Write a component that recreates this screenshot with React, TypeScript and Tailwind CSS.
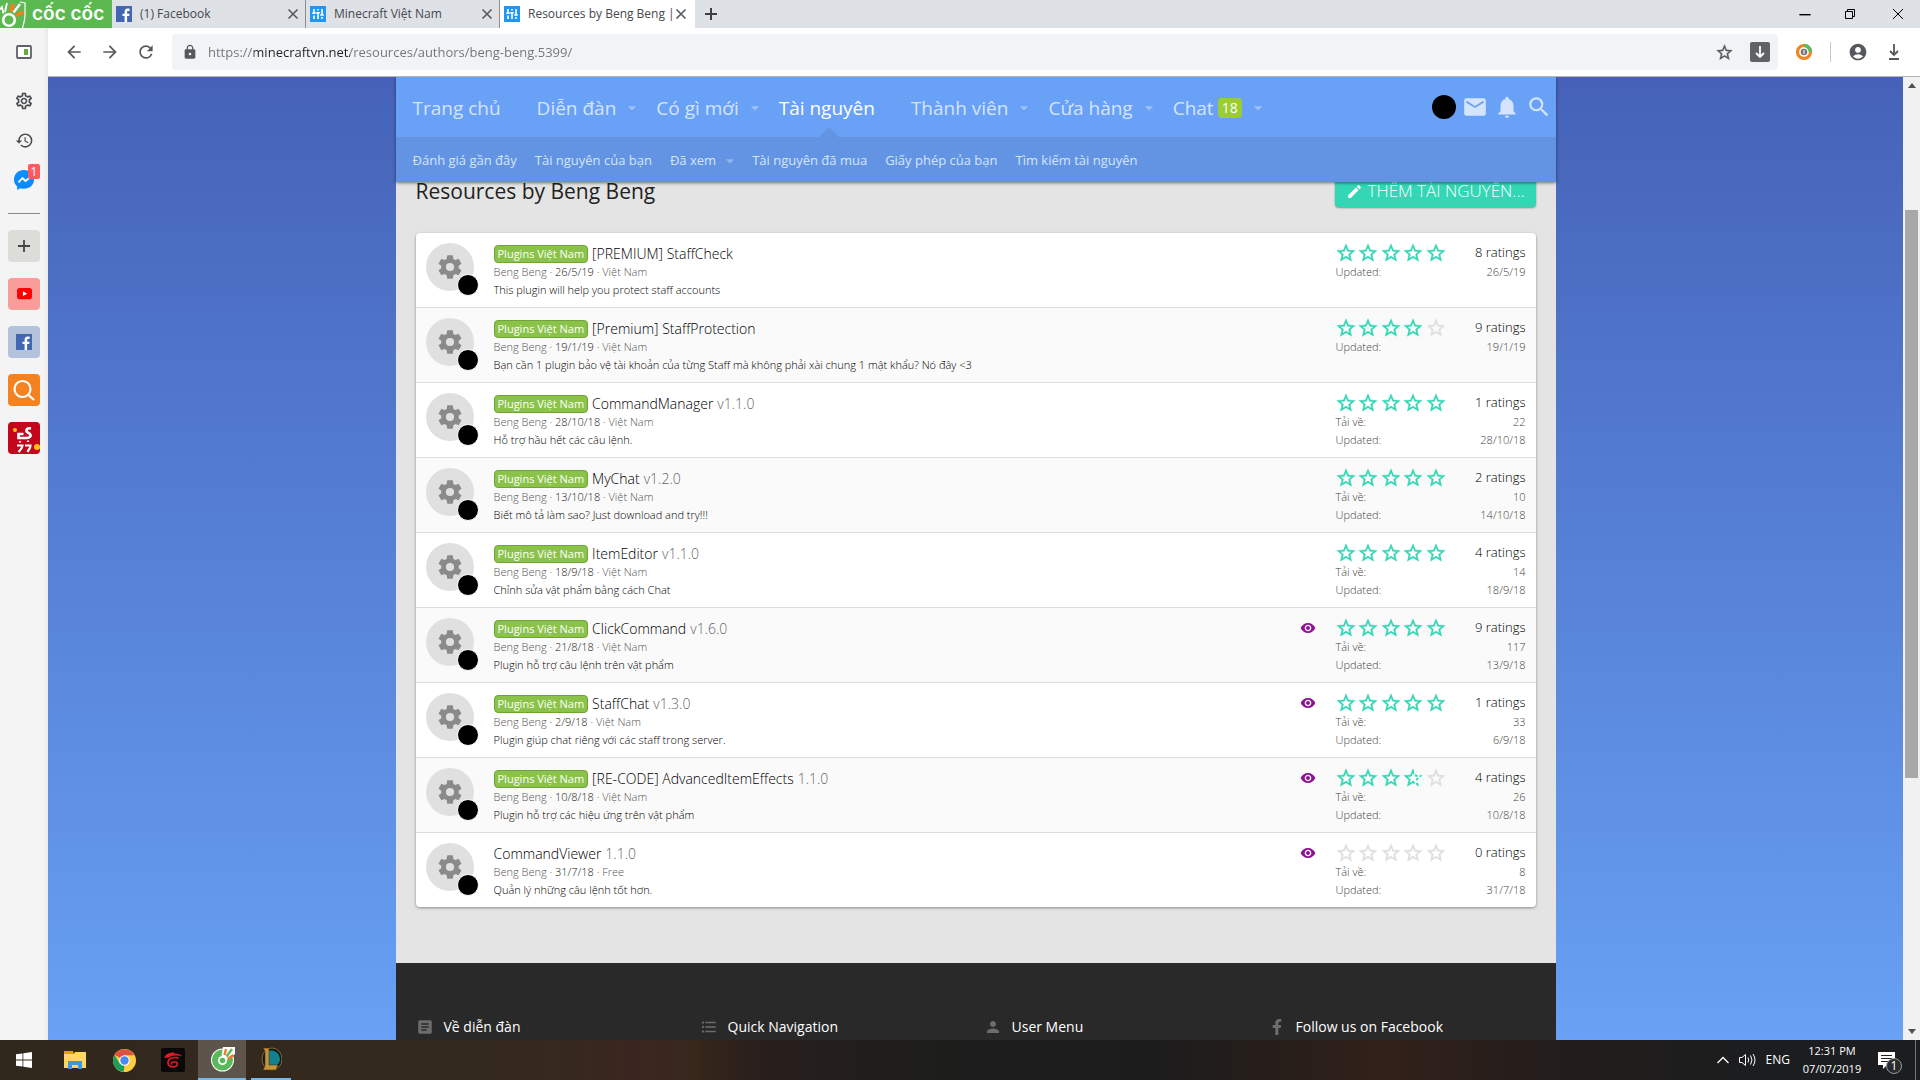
import type { ReactNode } from 'react';
import {
  MdAccountCircle,
  MdArrowBack,
  MdArrowDropDown,
  MdArrowForward,
  MdArticle,
  MdEdit,
  MdEmail,
  MdFormatListBulleted,
  MdHistory,
  MdLock,
  MdNotifications,
  MdOutlineSettings,
  MdPerson,
  MdRefresh,
  MdSearch,
  MdVisibility,
} from 'react-icons/md';
import { FaFacebookF } from 'react-icons/fa';

type Resource = {
  title: string;
  version?: string;
  label?: string;
  date: string;
  category: string;
  description: string;
  stars: number;
  ratings: number;
  downloads?: number;
  updated: string;
  watched?: boolean;
};

const VN = 'Plugins Việt Nam';

const resources: Resource[] = [
  { title: '[PREMIUM] StaffCheck', label: VN, date: '26/5/19', category: 'Việt Nam', description: 'This plugin will help you protect staff accounts', stars: 5, ratings: 8, updated: '26/5/19' },
  { title: '[Premium] StaffProtection', label: VN, date: '19/1/19', category: 'Việt Nam', description: 'Bạn cần 1 plugin bảo vệ tài khoản của từng Staff mà không phải xài chung 1 mật khẩu? Nó đây <3', stars: 4, ratings: 9, updated: '19/1/19' },
  { title: 'CommandManager', version: 'v1.1.0', label: VN, date: '28/10/18', category: 'Việt Nam', description: 'Hỗ trợ hầu hết các câu lệnh.', stars: 5, ratings: 1, downloads: 22, updated: '28/10/18' },
  { title: 'MyChat', version: 'v1.2.0', label: VN, date: '13/10/18', category: 'Việt Nam', description: 'Biết mô tả làm sao? Just download and try!!!', stars: 5, ratings: 2, downloads: 10, updated: '14/10/18' },
  { title: 'ItemEditor', version: 'v1.1.0', label: VN, date: '18/9/18', category: 'Việt Nam', description: 'Chỉnh sửa vật phẩm bằng cách Chat', stars: 5, ratings: 4, downloads: 14, updated: '18/9/18' },
  { title: 'ClickCommand', version: 'v1.6.0', label: VN, date: '21/8/18', category: 'Việt Nam', description: 'Plugin hỗ trợ câu lệnh trên vật phẩm', stars: 5, ratings: 9, downloads: 117, updated: '13/9/18', watched: true },
  { title: 'StaffChat', version: 'v1.3.0', label: VN, date: '2/9/18', category: 'Việt Nam', description: 'Plugin giúp chat riêng với các staff trong server.', stars: 5, ratings: 1, downloads: 33, updated: '6/9/18', watched: true },
  { title: '[RE-CODE] AdvancedItemEffects', version: '1.1.0', label: VN, date: '10/8/18', category: 'Việt Nam', description: 'Plugin hỗ trợ các hiệu ứng trên vật phẩm', stars: 3.5, ratings: 4, downloads: 26, updated: '10/8/18', watched: true },
  { title: 'CommandViewer', version: '1.1.0', date: '31/7/18', category: 'Free', description: 'Quản lý những câu lệnh tốt hơn.', stars: 0, ratings: 0, downloads: 8, updated: '31/7/18', watched: true },
];

function CloseIcon() {
  return (
    <svg viewBox="0 0 12 12" className="size-3" fill="none" stroke="currentColor" strokeWidth="1.6">
      <path d="M1.5 1.5l9 9M10.5 1.5l-9 9" />
    </svg>
  );
}

function GearIcon() {
  return (
    <svg viewBox="0 0 24 24" className="size-7" fill="currentColor">
      <path d="M12,15.5A3.5,3.5 0 0,1 8.5,12A3.5,3.5 0 0,1 12,8.5A3.5,3.5 0 0,1 15.5,12A3.5,3.5 0 0,1 12,15.5M19.43,12.97C19.47,12.65 19.5,12.33 19.5,12C19.5,11.67 19.47,11.34 19.43,11L21.54,9.37C21.73,9.22 21.78,8.95 21.66,8.73L19.66,5.27C19.54,5.05 19.27,4.96 19.05,5.05L16.56,6.05C16.04,5.66 15.5,5.32 14.87,5.07L14.5,2.42C14.46,2.18 14.25,2 14,2H10C9.75,2 9.54,2.18 9.5,2.42L9.13,5.07C8.5,5.32 7.96,5.66 7.44,6.05L4.95,5.05C4.73,4.96 4.46,5.05 4.34,5.27L2.34,8.73C2.21,8.95 2.27,9.22 2.46,9.37L4.57,11C4.53,11.34 4.5,11.67 4.5,12C4.5,12.33 4.53,12.65 4.57,12.97L2.46,14.63C2.27,14.78 2.21,15.05 2.34,15.27L4.34,18.73C4.46,18.95 4.73,19.03 4.95,18.95L7.44,17.94C7.96,18.34 8.5,18.68 9.13,18.93L9.5,21.58C9.54,21.82 9.75,22 10,22H14C14.25,22 14.46,21.82 14.5,21.58L14.87,18.93C15.5,18.67 16.04,18.34 16.56,17.94L19.05,18.95C19.27,19.03 19.54,18.95 19.66,18.73L21.66,15.27C21.78,15.05 21.73,14.78 21.54,14.63L19.43,12.97Z" />
    </svg>
  );
}

function FacebookSquare() {
  return (
    <svg viewBox="0 0 16 16" className="size-4 shrink-0">
      <rect width="16" height="16" fill="#4267b2" rx="0.5" />
      <path fill="#fff" d="M8.600 16V10H6.500V7.700h2.100V5.900c0-2.100 1.200-3.300 3.100-3.300.9 0 1.700.1 1.900.1v2.200h-1.300c-1 0-1.200.5-1.200 1.200v1.600h2.400l-.3 2.300h-2.100v6z" />
    </svg>
  );
}

function SlidersIcon() {
  return (
    <svg viewBox="0 0 16 16" className="size-4 shrink-0">
      <rect width="16" height="16" fill="#2196f3" />
      <path stroke="#fff" strokeWidth="1.600" fill="none" d="M4 3v4M4 9.500V13M8 3v1.500M8 7v6M12 3v5.500M12 11v2M2.200 7.200h3.600M6.200 6.800h3.600M10.200 9h3.600" />
    </svg>
  );
}

function CocCocMark() {
  return (
    <svg viewBox="0 0 26 28" className="h-7 w-[26px] shrink-0" fill="none">
      <circle cx="9" cy="20" r="5.800" stroke="#fff" strokeWidth="2.600" />
      <path d="M0 9.500L2 7l1.500 6.500M7 3L5 12" stroke="#fff" strokeWidth="1.800" />
      <path d="M13 4l-2 7.500" stroke="#ff7a1a" strokeWidth="3.600" />
      <path d="M13.500 12.500L20 4" stroke="#fff" strokeWidth="2.400" />
      <path d="M15.500 15.500l8-3.500" stroke="#ff7a1a" strokeWidth="3.400" />
      <path d="M20 2l5 1v9c.5 6-1 11-2.500 16" stroke="#fff" strokeWidth="1.200" />
    </svg>
  );
}

function BrowserTab({ icon, title, active, close }: { icon: ReactNode; title: string; active?: boolean; close: string }) {
  return (
    <div className={active ? 'flex w-[195px] items-center gap-2 bg-white pr-1.5 pl-1' : 'flex w-[194px] items-center gap-2 border-r border-[#8a8d91] px-1'}>
      {icon}
      <button className="min-w-0 flex-1 text-left text-[12px] whitespace-nowrap text-[#45484d]">{title}</button>
      <button aria-label={close} className="px-0.5 text-[#55585c]">
        <CloseIcon />
      </button>
    </div>
  );
}

function TabStrip() {
  return (
    <header className="flex h-7 shrink-0 bg-[#dee1e6]">
      <a href="#home" className="flex w-28 items-center gap-1.5 overflow-hidden bg-[#5cb850] text-white">
        <CocCocMark />
        <span className="font-['Inter',sans-serif] text-[19px] leading-7 font-semibold whitespace-nowrap">cốc cốc</span>
      </a>
      <BrowserTab icon={<FacebookSquare />} title="(1) Facebook" close="Close Facebook" />
      <BrowserTab icon={<SlidersIcon />} title="Minecraft Việt Nam" close="Close Minecraft" />
      <BrowserTab icon={<SlidersIcon />} title="Resources by Beng Beng |" active close="Close Resources" />
      <button aria-label="New tab" className="px-2.5 text-[#3c4043]">
        <svg viewBox="0 0 12 12" className="size-3" stroke="currentColor" strokeWidth="2">
          <path d="M6 0v12M0 6h12" />
        </svg>
      </button>
      <div className="ml-auto flex items-center text-black">
        <button aria-label="Minimize" className="px-4">
          <svg viewBox="0 0 10 10" className="w-[14px]" stroke="currentColor"><path d="M1 5.500h8" /></svg>
        </button>
        <button aria-label="Restore" className="px-4">
          <svg viewBox="0 0 12 12" className="w-3" fill="none" stroke="currentColor"><path d="M1.500 3.500h7v7h-7zM3.500 3.500v-2h7v7h-2" /></svg>
        </button>
        <button aria-label="Close window" className="pr-4 pl-5">
          <svg viewBox="0 0 12 12" className="w-3" stroke="currentColor"><path d="M1 1l10 10M11 1L1 11" /></svg>
        </button>
      </div>
    </header>
  );
}

function SideRail() {
  return (
    <aside className="flex w-12 shrink-0 flex-col items-center bg-linear-to-r from-[#f4f4f4] from-90% to-[#e9e9e9] text-[#4a4d50]">
      <button aria-label="Toggle panel" className="mt-4">
        <svg viewBox="0 0 16 16" className="size-4"><rect x="1" y="2" width="14" height="12" rx="1" fill="#fff" stroke="#5f6368" strokeWidth="1.800" /><path fill="#5fae3a" d="M8 5h4v6H8z" /></svg>
      </button>
      <button aria-label="Settings" className="mt-[31px] text-[20px]"><MdOutlineSettings /></button>
      <button aria-label="History" className="mt-5 text-[19px]"><MdHistory /></button>
      <button aria-label="Messenger" className="relative mt-5">
        <svg viewBox="0 0 20 20" className="size-5">
          <path fill="#0a8cff" d="M10 0C4.300 0 0 4.100 0 9.500c0 2.900 1.200 5.300 3.200 7V20l3-1.700c1.200.4 2.500.5 3.800.5 5.700 0 10-4 10-9.300S15.700 0 10 0z" />
          <path fill="none" stroke="#fff" strokeWidth="1.800" d="M4.500 12.300L8.500 8l3 3 4-3.300" />
        </svg>
        <span className="absolute -top-1.5 -right-1.5 h-[15px] w-3 rounded-xs bg-[#ff5a5f] text-[12px] leading-[15px] text-white">1</span>
      </button>
      <hr className="mt-[23px] w-8 border-[#8b8b8b]" />
      <div className="mt-4 flex flex-col gap-4">
        <button aria-label="Add shortcut" className="grid size-8 place-items-center rounded bg-[#dcdcd8]">
          <svg viewBox="0 0 12 12" className="size-3" stroke="#444" strokeWidth="1.800"><path d="M6 0v12M0 6h12" /></svg>
        </button>
        <button aria-label="YouTube" className="grid size-8 place-items-center rounded bg-[#f99d9b]">
          <svg viewBox="0 0 16 12" className="w-[15px]"><rect width="16" height="12" rx="3" fill="#f00" /><path fill="#fff" d="M6.300 3.500v5L11 6z" /></svg>
        </button>
        <button aria-label="Facebook" className="grid size-8 place-items-center rounded bg-[#b5c2de]"><FacebookSquare /></button>
        <button aria-label="Search" className="grid size-8 place-items-center rounded bg-[#f58220]">
          <svg viewBox="0 0 24 24" className="size-6" fill="none" stroke="#fff" strokeWidth="2.200"><circle cx="10.500" cy="11" r="8" /><path d="M16.500 17l5.500 5" /></svg>
        </button>
        <button aria-label="Games" className="size-8 overflow-hidden rounded bg-[#c4061c]">
          <svg viewBox="0 0 32 32" className="size-8" fill="none">
            <circle cx="7" cy="8" r="2" fill="#ffc20e" /><circle cx="29" cy="25" r="3" fill="#ffc20e" />
            <path stroke="#fff" strokeWidth="2.600" d="M23 6.500c-5-1-6 3-2.500 4.500 4 2 2 5-2 5h-8v-4h5" />
            <path stroke="#fff" strokeWidth="2.200" d="M9 23.500h5.500c0 3-2 4-4 6.500M17 23.500h5.500c0 3-2 4-3 6.500M12 19v1.500M20 18.500V20" />
          </svg>
        </button>
      </div>
    </aside>
  );
}

const STAR = 'M22 9.240l-7.190-.62L12 2 9.190 8.630 2 9.240l5.460 4.730L5.820 21 12 17.270 18.180 21l-1.630-7.030L22 9.240zM12 15.400l-3.760 2.270 1-4.280-3.320-2.880 4.380-.38L12 6.100l1.710 4.040 4.380.38-3.320 2.880 1 4.280L12 15.400z';

function StarIcon({ className }: { className: string }) {
  return (
    <svg viewBox="0 0 24 24" className={className} fill="currentColor" stroke="currentColor" strokeWidth="0.4">
      <path d={STAR} />
    </svg>
  );
}

function HalfStar() {
  return (
    <svg viewBox="0 0 24 24" className="size-[22px]" fill="#2fd6b3" stroke="#2fd6b3" strokeWidth="0.4">
      <clipPath id="half-left"><path d="M0 0h13v24H0z" /></clipPath>
      <clipPath id="half-dashes"><path d="M14 5h3v7h-3zM19 7h5v4h-5zM15 12h3.500v2.500H15zM12 14h2v5h-2zM15.500 17.500h4V22h-4z" /></clipPath>
      <path d={STAR} clipPath="url(#half-left)" />
      <path d={STAR} clipPath="url(#half-dashes)" />
    </svg>
  );
}

function AddressBar() {
  return (
    <div className="flex h-[49px] shrink-0 items-center border-b border-[#b5b5b5] bg-white pr-5 pl-4 text-[#55585c]">
      <div className="flex w-[108px] gap-4 text-[20px]">
        <button aria-label="Back"><MdArrowBack /></button>
        <button aria-label="Forward"><MdArrowForward /></button>
        <button aria-label="Reload"><MdRefresh /></button>
      </div>
      <div className="flex h-9 flex-1 items-center rounded bg-[#f1f3f4] pr-2 pl-2.5">
        <MdLock className="size-4" />
        <input
          aria-label="Address"
          className="ml-2.5 min-w-0 flex-1 bg-[linear-gradient(90deg,#70757a_46px,#202124_46px,#202124_142px,#70757a_142px)] bg-clip-text pt-0.5 text-[13px] text-transparent outline-none"
          defaultValue="https://minecraftvn.net/resources/authors/beng-beng.5399/"
        />
        <button aria-label="Bookmark"><StarIcon className="size-[19px]" /></button>
        <button aria-label="Download media" className="ml-4 grid size-5 place-items-center rounded-xs bg-[#5f6368]">
          <svg viewBox="0 0 12 12" className="size-3" fill="none" stroke="#fff" strokeWidth="1.800"><path d="M6 0v11M2 7l4 4 4-4" /></svg>
        </button>
      </div>
      <button aria-label="Extension" className="ml-[17px]">
        <svg viewBox="0 0 18 18" className="size-[18px]" fill="none">
          <circle cx="9" cy="9" r="6.500" stroke="#f58220" strokeWidth="3.200" />
          <path d="M9 2.500A6.500 6.500 0 0 1 15.500 9" stroke="#5cb85c" strokeWidth="3.600" />
          <circle cx="9" cy="9" r="3.300" fill="#777" /><path d="M9 7v4" stroke="#fff" />
        </svg>
      </button>
      <span className="mx-[17px] h-5 w-px bg-[#c8c8c8]" />
      <button aria-label="Profile" className="text-[20px]"><MdAccountCircle /></button>
      <button aria-label="Downloads" className="ml-5">
        <svg viewBox="0 0 12 16" className="h-4 w-3" fill="none" stroke="currentColor" strokeWidth="1.800"><path d="M6 0v11M2 7l4 4 4-4M1 15h10" /></svg>
      </button>
    </div>
  );
}

const navItems = [
  { label: 'Trang chủ' },
  { label: 'Diễn đàn', menu: true },
  { label: 'Có gì mới', menu: true },
  { label: 'Tài nguyên', active: true },
  { label: 'Thành viên', menu: true },
  { label: 'Cửa hàng', menu: true },
  { label: 'Chat', badge: '18', menu: true },
];

const subItems = [
  { label: 'Đánh giá gần đây' },
  { label: 'Tài nguyên của bạn' },
  { label: 'Đã xem', menu: true },
  { label: 'Tài nguyên đã mua' },
  { label: 'Giấy phép của bạn' },
  { label: 'Tìm kiếm tài nguyên' },
];

function SiteHeader() {
  return (
    <div className="relative z-10 shadow-[0_1px_3px_rgba(0,0,0,0.5)]">
      <nav className="flex h-[60px] items-center bg-[#69a1f6] pr-1 pl-[17px] text-[19px] text-[#d5e4fd]">
        {navItems.map((n) => (
          <div key={n.label} className={n.menu ? 'relative flex h-full items-center pt-0.5 pr-[14px]' : 'relative flex h-full items-center pt-0.5 pr-9'}>
            <a href="#nav" className={n.active ? 'text-white' : ''}>{n.label}</a>
            {n.active && <span className="absolute bottom-0 left-10 border-x-10 border-b-10 border-x-transparent border-b-[#6394e3]" />}
            {n.badge && <span className="ml-1 rounded bg-[#9acd32] px-1 text-[14px] leading-5 text-white">{n.badge}</span>}
            {n.menu && <MdArrowDropDown className="ml-1.5 size-5 text-[#9fc2f9]" />}
          </div>
        ))}
        <div className="ml-auto flex items-center gap-1.5 text-[26px]">
          <button aria-label="Account" className="size-6 rounded-full bg-black" />
          <button aria-label="Inbox"><MdEmail /></button>
          <button aria-label="Alerts"><MdNotifications /></button>
          <button aria-label="Search site"><MdSearch /></button>
        </div>
      </nav>
      <nav className="flex h-[45px] items-center gap-[18px] bg-[#6394e3] pt-0.5 pl-[17px] text-[13px] font-medium text-[#d5e4fd]">
        {subItems.map((s) => (
          <div key={s.label} className="flex items-center">
            <a href="#sub">{s.label}</a>
            {s.menu && <MdArrowDropDown className="-mr-1.5 ml-1 size-5 text-[#92b6ee]" />}
          </div>
        ))}
      </nav>
    </div>
  );
}

function Stars({ value }: { value: number }) {
  return (
    <div role="img" aria-label={`${value} / 5`} className="-ml-px flex w-28 justify-between">
      {[1, 2, 3, 4, 5].map((i) =>
        value >= i ? (
          <StarIcon key={i} className="size-[22px] text-[#2fd6b3]" />
        ) : value >= i - 0.5 ? (
          <HalfStar key={i} />
        ) : (
          <StarIcon key={i} className="size-[22px] text-[#dedede]" />
        ),
      )}
    </div>
  );
}

function ResourceRow({ r }: { r: Resource }) {
  return (
    <li className="flex h-[75px] border-b border-[#dedede] px-2.5 last:h-[74px] last:border-b-0 even:bg-[#fafafa]">
      <a href="#resource" aria-label={r.title} className="relative mt-2.5 grid size-12 shrink-0 place-items-center rounded-full bg-[#e0e0e0] text-[#8a8a8a]">
        <GearIcon />
        <span className="absolute top-[31px] left-[31px] size-[22px] rounded-full border border-white bg-black" />
      </a>
      <div className="ml-5 min-w-0 flex-1 pt-2.5">
        <div className="flex h-5 items-center text-[14px] font-light text-black">
          {r.label && (
            <span className="mt-0.5 mr-1 rounded border border-[#6fa536] bg-[#8bc34a] px-[3px] text-[11px] leading-4 font-normal text-white">{r.label}</span>
          )}
          <a href="#resource">{r.title}</a>
          {r.version && <span className="ml-1 text-[#666]">{r.version}</span>}
        </div>
        <p className="text-[11px] leading-[17px] font-light text-[#555]">
          Beng Beng · <span className="text-[#222]">{r.date}</span> · {r.category}
        </p>
        <p className="truncate text-[11px] leading-5 font-light text-black">{r.description}</p>
      </div>
      {r.watched && <MdVisibility title="Watched" className="mt-3 mr-5 size-4 text-[#8e1294]" />}
      <div className="w-[190px] pt-2.5">
        <div className="flex h-5 items-center justify-between text-[13px] font-light text-black">
          <Stars value={r.stars} />
          <span>{r.ratings} ratings</span>
        </div>
        <dl className="grid grid-cols-2 text-[11px] leading-[18px] font-light text-[#444]">
          {r.downloads !== undefined && (
            <>
              <dt>Tải về:</dt>
              <dd className="text-right">{r.downloads}</dd>
            </>
          )}
          <dt>Updated:</dt>
          <dd className="text-right">{r.updated}</dd>
        </dl>
      </div>
    </li>
  );
}

const footerItems = [
  { label: 'Về diễn đàn', icon: <MdArticle /> },
  { label: 'Quick Navigation', icon: <MdFormatListBulleted /> },
  { label: 'User Menu', icon: <MdPerson /> },
  { label: 'Follow us on Facebook', icon: <FaFacebookF className="p-px" /> },
];

function Page() {
  return (
    <div className="flex min-h-0 flex-1">
      <main className="flex min-w-0 flex-1 justify-center overflow-hidden bg-linear-to-b from-[#4562b8] to-[#68a1f5]">
        <div className="flex w-full max-w-[1160px] flex-col bg-[#e4e4e4]">
          <SiteHeader />
          <div className="-mt-[9px] flex items-center justify-between px-5">
            <h1 className="text-[21px] leading-9 text-[#222]">Resources by Beng Beng</h1>
            <button className="flex h-8 items-center gap-1 rounded bg-[#33d6b5] px-[11px] text-[17px] font-light text-white shadow-[0_1px_2px_rgba(0,0,0,0.4)]">
              <MdEdit /> THÊM TÀI NGUYÊN...
            </button>
          </div>
          <ul className="mx-5 mt-6 overflow-hidden rounded bg-white shadow-[0_1px_3px_rgba(0,0,0,0.4)]">
            {resources.map((r) => (
              <ResourceRow key={r.title} r={r} />
            ))}
          </ul>
          <footer className="mt-auto grid h-[77px] grid-cols-4 items-end gap-x-4 bg-[#292929] px-5 pb-[3px] text-[14px] text-white">
            {footerItems.map((f) => (
              <h2 key={f.label} className="flex items-center gap-2.5">
                <span className="text-[18px] text-[#6c6c6c]">{f.icon}</span>
                {f.label}
              </h2>
            ))}
          </footer>
        </div>
      </main>
      <div className="flex w-[17px] flex-col items-center bg-[#f1f1f1] py-1.5">
        <span className="border-x-4 border-b-5 border-x-transparent border-b-[#505050]" />
        <span className="mt-[122px] h-[568px] w-[13px] bg-[#a8a8a8]" />
        <span className="mt-auto border-x-4 border-t-5 border-x-transparent border-t-[#505050]" />
      </div>
    </div>
  );
}

function Taskbar() {
  return (
    <footer className="flex h-10 shrink-0 items-center bg-[linear-gradient(90deg,#31281d_0%,#35291d_28%,#3a2620_33%,#38281c_36%,#2a1f1c_39%,#1f1e1d_46%,#1c1c1c_60%,#2b1f1a_69%,#33211a_72%,#241d1b_80%,#1b1d1f_92%,#1b1d1f_100%)] text-white">
      <button aria-label="Start" className="grid h-full w-12 place-items-center">
        <svg viewBox="0 0 16 16" className="size-4" fill="#fff"><path d="M0 2.300l6.500-.9v6.200H0zM7.300 1.300L16 0v7.600H7.300zM0 8.400h6.500v6.200L0 13.700zM7.300 8.400H16V16l-8.700-1.300z" /></svg>
      </button>
      <button aria-label="File Explorer" className="grid h-full w-[54px] place-items-center">
        <svg viewBox="0 0 22 18" className="w-[22px]"><path fill="#e0a10c" d="M0 0h9l1 3H0z" /><path fill="#ffd767" d="M0 3h10l1-2h11v16H0z" /><path fill="#3f97de" d="M4 10h14v8h-4v-4H8v4H4z" /></svg>
      </button>
      <button aria-label="Chrome" className="grid h-full w-11 place-items-center">
        <svg viewBox="0 0 24 24" className="size-[23px]">
          <circle cx="12" cy="12" r="12" fill="#ffcd40" />
          <path fill="#de5246" d="M12 12L1.600 6A12 12 0 0 1 22.400 6.500H12z" />
          <path fill="#1a9f5b" d="M1.600 6L7 15.200 12 17.500l-1 6.450A12 12 0 0 1 1.600 6z" />
          <circle cx="12" cy="12" r="5.500" fill="#fff" /><circle cx="12" cy="12" r="4.400" fill="#4a8af4" />
        </svg>
      </button>
      <button aria-label="Garena" className="grid h-full w-[52px] place-items-center pl-0.5">
        <svg viewBox="0 0 24 24" className="size-6" fill="none">
          <rect width="24" height="24" rx="2" fill="#080808" />
          <path fill="#e01b24" d="M3 9.500c2-3.500 5-4.500 7.500-4.700L13 4l-.5 1.500c3 0 6.500.5 8.500 2.500-4-.8-9-.8-12 .8-1.500.800-3 1.500-6 .7z" />
          <path stroke="#e01b24" strokeWidth="1.700" d="M17.500 9.800c-6-1-10.500.8-10.500 4.900 0 4.500 7 5.500 9 2.500.700-1.300.3-3-1-3.200h-3.500c-1.200.3-1.500 1.800-.5 2.500" />
        </svg>
      </button>
      <button aria-label="Cốc Cốc" className="grid h-full w-12 place-items-center border-b-2 border-[#76b9ed] bg-[#5d554c]">
        <svg viewBox="0 0 25 25" className="size-[25px]" fill="none">
          <circle cx="12.500" cy="13" r="11.500" fill="#fff" /><circle cx="12.500" cy="13" r="10.500" fill="#5cb85c" />
          <path fill="#fff" d="M11 12L13 0h12v7l-8 6z" /><path stroke="#f5792a" strokeWidth="2.400" d="M14.500 8L16 2M17.500 12l6-4" /><path stroke="#5cb85c" strokeWidth="2.400" d="M16.500 9.500L22 2" />
          <circle cx="12.500" cy="13.500" r="4.500" fill="#fff" /><circle cx="12.500" cy="13.500" r="2.800" fill="#5cb85c" />
        </svg>
      </button>
      <button aria-label="League of Legends" className="ml-[5px] grid h-full w-10 place-items-center border-b-2 border-[#76b9ed]">
        <svg viewBox="0 0 22 24" className="h-6"><ellipse cx="12" cy="12" rx="10" ry="11" fill="#0b1a20" stroke="#8a6a2c" /><path fill="#12808f" d="M9 4c6-2 11 3 11 9-1 4-3 5-5 6H9z" /><path fill="#c8953a" stroke="#4a3210" strokeWidth=".6" d="M3 1h6v17h9l-2 5H3l2-4V4z" /></svg>
      </button>
      <div className="ml-auto flex h-full items-center">
        <button aria-label="Show hidden icons">
          <svg viewBox="0 0 12 8" className="w-3" fill="none" stroke="#fff" strokeWidth="1.300"><path d="M.5 7L6 1.500 11.500 7" /></svg>
        </button>
        <button aria-label="Volume" className="ml-2.5">
          <svg viewBox="0 0 17 14" className="w-[17px]" fill="none" stroke="#fff"><path d="M.5 4.500h2.500L6.500 1.500v11L3 9.500H.5zM9 4.500q1.500 2.500 0 5M11.500 2.500q3 4.500 0 9M14 1q4 6 0 12" /></svg>
        </button>
        <button className="ml-2.5 text-[12px]">ENG</button>
        <button className="ml-3 w-[60px] text-center text-[11px] leading-[18px] whitespace-nowrap">
          <span className="block">12:31 PM</span>
          <span className="block">07/07/2019</span>
        </button>
        <button aria-label="Notifications" className="relative mr-5 ml-4">
          <svg viewBox="0 0 17 17" className="size-[17px]"><path fill="#fff" d="M0 0h17v13H9l-4 4v-4H0z" /><path stroke="#222" d="M3 3.500h11M3 6.500h11M3 9.500h7" /></svg>
          <span className="absolute top-1.5 left-2 grid size-4 place-items-center rounded-full border border-[#999] bg-[#2a2b2c] text-[12px] leading-none">1</span>
        </button>
        <span className="mr-1 h-full w-px bg-[#777]" />
      </div>
    </footer>
  );
}

export default function App() {
  return (
    <div className="flex h-screen flex-col overflow-hidden font-['Open_Sans','Noto_Sans',sans-serif]">
      <TabStrip />
      <div className="flex min-h-0 flex-1">
        <SideRail />
        <div className="flex min-w-0 flex-1 flex-col">
          <AddressBar />
          <Page />
        </div>
      </div>
      <Taskbar />
    </div>
  );
}
